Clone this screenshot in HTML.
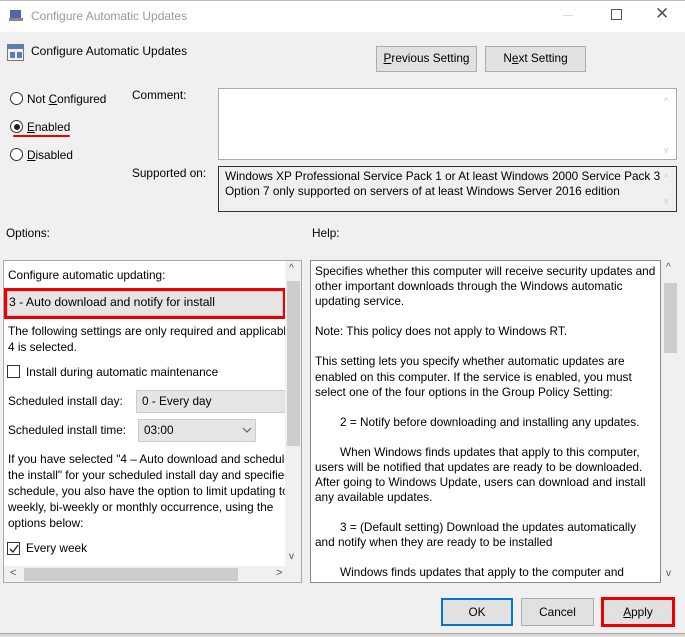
<!DOCTYPE html>
<html><head><style>
*{margin:0;padding:0;box-sizing:border-box}
body{width:685px;height:637px;background:#f0f0f0;font-family:"Liberation Sans",sans-serif;font-size:11.8px;color:#000;position:relative;overflow:hidden}
.a{position:absolute;white-space:nowrap}
.btn{position:absolute;background:#e1e1e1;border:1px solid #adadad;text-align:center;line-height:23px}
.rad{position:absolute;width:13px;height:13px;border:1px solid #333;border-radius:50%;background:#fff}
.cb{position:absolute;width:13px;height:13px;border:1px solid #333;background:#fff}
.t{position:absolute;white-space:nowrap;line-height:15px}
</style></head><body>
<div class="a" style="left:0;top:0;width:685px;height:32px;background:#fff;border-top:1px solid #bbb"></div>
<svg class="a" style="left:8px;top:8px" width="16" height="16"><rect x="2" y="2" width="11" height="8" fill="#4a6aa0"/><rect x="1" y="10" width="14" height="3" fill="#888"/></svg>
<div class="a" style="left:31px;top:9px;color:#999;font-size:12px">Configure Automatic Updates</div>
<div class="a" style="left:563px;top:15px;width:10px;height:1px;background:#ddd"></div>
<div class="a" style="left:611px;top:9px;width:11px;height:11px;border:1px solid #555"></div>
<div class="a" style="left:655px;top:4px;font-size:17px;color:#555">✕</div>

<svg class="a" style="left:7px;top:44px" width="17" height="17"><rect x="0.5" y="0.5" width="16" height="16" fill="#f5f0e0" stroke="#777"/><rect x="1" y="1" width="15" height="4" fill="#5a7bbf"/><rect x="3" y="8" width="5" height="6" fill="#5a7bbf"/><rect x="10" y="8" width="5" height="6" fill="#5a7bbf"/></svg>
<div class="a" style="left:31px;top:44px;font-size:12px">Configure Automatic Updates</div>
<div class="btn" style="left:376px;top:46px;width:101px;height:26px"><u>P</u>revious Setting</div>
<div class="btn" style="left:485px;top:46px;width:101px;height:26px">N<u>e</u>xt Setting</div>

<div class="rad" style="left:10px;top:92px"></div>
<div class="a" style="left:27px;top:92px">Not <u>C</u>onfigured</div>
<div class="rad" style="left:10px;top:120px"><div style="position:absolute;left:2.5px;top:2.5px;width:6px;height:6px;border-radius:50%;background:#222"></div></div>
<div class="a" style="left:27px;top:120px"><u>E</u>nabled</div>
<div class="a" style="left:13px;top:135px;width:57px;height:2px;background:#e00;border-radius:1px"></div>
<div class="rad" style="left:10px;top:148px"></div>
<div class="a" style="left:27px;top:148px"><u>D</u>isabled</div>

<div class="a" style="left:132px;top:88px">Comment:</div>
<div class="a" style="left:218px;top:88px;width:459px;height:72px;background:#fff;border:1px solid #aaa"></div>
<div class="a" style="left:664px;top:96px;color:#ccc;font-size:9px">^</div>
<div class="a" style="left:664px;top:145px;color:#ccc;font-size:9px">v</div>
<div class="a" style="left:132px;top:166px">Supported on:</div>
<div class="a" style="left:218px;top:166px;width:459px;height:46px;border:1px solid #333;background:#f0f0f0"></div>
<div class="t" style="left:225px;top:169px">Windows XP Professional Service Pack 1 or At least Windows 2000 Service Pack 3</div>
<div class="t" style="left:225px;top:184px">Option 7 only supported on servers of at least Windows Server 2016 edition</div>
<div class="a" style="left:664px;top:172px;color:#ccc;font-size:9px">^</div>
<div class="a" style="left:664px;top:196px;color:#ccc;font-size:9px">v</div>

<div class="a" style="left:6px;top:226px">Options:</div>
<div class="a" style="left:312px;top:226px">Help:</div>

<!-- left panel -->
<div class="a" style="left:3px;top:260px;width:299px;height:323px;background:#fff;border:1px solid #aaa;overflow:hidden">
<div class="t" style="left:4px;top:7px">Configure automatic updating:</div>
<div class="a" style="left:0px;top:27px;width:282px;height:31px;border:3px solid #e00"></div>
<div class="a" style="left:3px;top:30px;width:276px;height:25px;background:#e5e5e5;border:1px solid #ccc"></div>
<div class="t" style="left:5px;top:34px;font-size:12.2px">3 - Auto download and notify for install</div>
<div class="t" style="left:4px;top:63px">The following settings are only required and applicable if</div>
<div class="t" style="left:4px;top:79px">4 is selected.</div>
<div class="cb" style="left:3px;top:104px"></div>
<div class="t" style="left:22px;top:104px">Install during automatic maintenance</div>
<div class="t" style="left:4px;top:133px">Scheduled install day:</div>
<div class="a" style="left:132px;top:129px;width:160px;height:23px;background:#e5e5e5;border:1px solid #ccc"></div>
<div class="t" style="left:138px;top:133px">0 - Every day</div>
<div class="t" style="left:4px;top:162px">Scheduled install time:</div>
<div class="a" style="left:134px;top:158px;width:118px;height:23px;background:#e5e5e5;border:1px solid #ccc"></div>
<div class="t" style="left:140px;top:162px">03:00</div>
<svg class="a" style="left:238px;top:166px" width="10" height="6"><path d="M1 1L5 5L9 1" fill="none" stroke="#555"/></svg>
<div class="t" style="left:4px;top:191px">If you have selected "4 – Auto download and schedule</div>
<div class="t" style="left:4px;top:207px">the install" for your scheduled install day and specified</div>
<div class="t" style="left:4px;top:223px">schedule, you also have the option to limit updating to</div>
<div class="t" style="left:4px;top:239px">weekly, bi-weekly or monthly occurrence, using the</div>
<div class="t" style="left:4px;top:255px">options below:</div>
<div class="cb" style="left:3px;top:281px"></div>
<svg class="a" style="left:4px;top:282px" width="12" height="12"><path d="M2 6L5 9L10 2" fill="none" stroke="#222" stroke-width="1.3"/></svg>
<div class="t" style="left:22px;top:280px">Every week</div>
<div class="a" style="left:281px;top:0;width:17px;height:305px;background:#f0f0f0"></div>
<div class="a" style="left:283px;top:20px;width:13px;height:165px;background:#cdcdcd"></div>
<div class="a" style="left:285px;top:2px;font-size:10px;color:#555">^</div>
<div class="a" style="left:285px;top:290px;font-size:10px;color:#555">v</div>
<div class="a" style="left:0;top:305px;width:298px;height:17px;background:#f0f0f0"></div>
<div class="a" style="left:20px;top:307px;width:214px;height:13px;background:#cdcdcd"></div>
<div class="a" style="left:6px;top:306px;font-size:11px;color:#555">&lt;</div>
<div class="a" style="left:272px;top:306px;font-size:11px;color:#555">&gt;</div>
</div>

<!-- right panel -->
<div class="a" style="left:310px;top:260px;width:351px;height:323px;background:#fff;border:1px solid #888;overflow:hidden">
<div class="t" style="left:4px;top:3px">Specifies whether this computer will receive security updates and</div>
<div class="t" style="left:4px;top:18px">other important downloads through the Windows automatic</div>
<div class="t" style="left:4px;top:33px">updating service.</div>
<div class="t" style="left:4px;top:63px">Note: This policy does not apply to Windows RT.</div>
<div class="t" style="left:4px;top:93px">This setting lets you specify whether automatic updates are</div>
<div class="t" style="left:4px;top:109px">enabled on this computer. If the service is enabled, you must</div>
<div class="t" style="left:4px;top:124px">select one of the four options in the Group Policy Setting:</div>
<div class="t" style="left:29px;top:154px">2 = Notify before downloading and installing any updates.</div>
<div class="t" style="left:29px;top:184px">When Windows finds updates that apply to this computer,</div>
<div class="t" style="left:4px;top:199px">users will be notified that updates are ready to be downloaded.</div>
<div class="t" style="left:4px;top:214px">After going to Windows Update, users can download and install</div>
<div class="t" style="left:4px;top:229px">any available updates.</div>
<div class="t" style="left:29px;top:259px">3 = (Default setting) Download the updates automatically</div>
<div class="t" style="left:4px;top:274px">and notify when they are ready to be installed</div>
<div class="t" style="left:29px;top:304px">Windows finds updates that apply to the computer and</div>
<div class="t" style="left:4px;top:319px">downloads them in the background</div>
</div>
<div class="a" style="left:662px;top:260px;width:17px;height:323px;background:#f0f0f0"></div>
<div class="a" style="left:664px;top:283px;width:13px;height:70px;background:#cdcdcd"></div>
<div class="a" style="left:666px;top:262px;font-size:10px;color:#555">^</div>
<div class="a" style="left:666px;top:568px;font-size:10px;color:#555">v</div>

<div class="btn" style="left:441px;top:598px;width:72px;height:28px;border:2px solid #0078d7;line-height:24px">OK</div>
<div class="btn" style="left:521px;top:598px;width:73px;height:28px;line-height:26px">Cancel</div>
<div class="btn" style="left:601px;top:597px;width:74px;height:30px;border:3px solid #e00;line-height:24px"><u>A</u>pply</div>
<div class="a" style="left:0;top:633px;width:685px;height:4px;background:#d8d8d8;border-top:1px solid #aaa"></div>
</body></html>
